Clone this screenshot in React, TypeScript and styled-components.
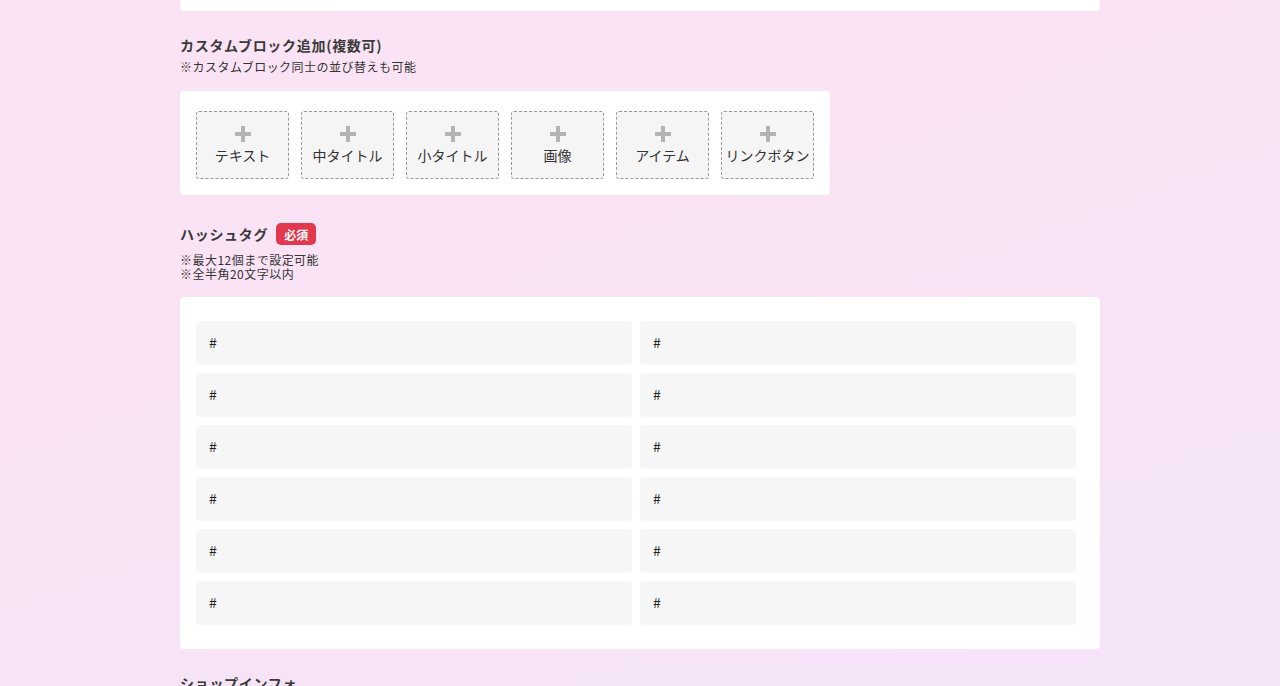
import React from "react";
import styled, { createGlobalStyle } from "styled-components";

const GlobalStyle = createGlobalStyle`
  html, body {
    margin: 0;
    padding: 0;
  }
  body {
    font-family: "Noto Sans CJK JP", "Noto Sans", sans-serif;
    color: #333;
    background: linear-gradient(160deg, #fbe3f4 0%, #f8e3f5 50%, #f4e4f8 100%);
    min-height: 686px;
    overflow: hidden;
  }
`;

const Page = styled.div`
  width: 920px;
  margin: 0 auto;
`;

const TopCard = styled.div`
  height: 11px;
  background: #fff;
  border-radius: 0 0 4px 4px;
`;

const Section = styled.section<{ $top: number }>`
  margin-top: ${(p) => p.$top}px;
`;

const TitleRow = styled.div`
  display: flex;
  align-items: center;
  gap: 8px;
  height: 22px;
`;

const Title = styled.h2`
  margin: 0;
  font-size: 14px;
  line-height: 20px;
  font-weight: 700;
  letter-spacing: 0.05em;
  color: #3a3a3a;
`;

const Badge = styled.span`
  display: inline-flex;
  align-items: center;
  justify-content: center;
  height: 22px;
  padding: 0 8px;
  border-radius: 5px;
  background: #e0384c;
  color: #fff;
  font-size: 12px;
  font-weight: 700;
`;

const Note = styled.p<{ $top: number }>`
  margin: ${(p) => p.$top}px 0 0;
  font-size: 12px;
  line-height: 14px;
  letter-spacing: 0.04em;
  color: #333;
`;

const Card = styled.div<{ $width?: number; $pad: string; $top: number }>`
  width: ${(p) => (p.$width ? `${p.$width}px` : "auto")};
  box-sizing: border-box;
  margin-top: ${(p) => p.$top}px;
  padding: ${(p) => p.$pad};
  background: #fff;
  border-radius: 4px;
`;

const BlockList = styled.div`
  display: flex;
  gap: 12px;
`;

const BlockButton = styled.button`
  width: 93px;
  height: 68px;
  box-sizing: border-box;
  padding: 13px 0 0;
  display: flex;
  flex-direction: column;
  align-items: center;
  gap: 3px;
  background: #f5f5f5;
  border: 1px dashed #999;
  border-radius: 3px;
  font-family: inherit;
  font-size: 14px;
  line-height: 18px;
  color: #333;
  white-space: nowrap;
  cursor: pointer;
`;

const TagGrid = styled.div`
  display: grid;
  grid-template-columns: 436px 436px;
  gap: 8px;
`;

const TagInput = styled.div`
  height: 44px;
  box-sizing: border-box;
  padding: 0 12px 2px 13px;
  display: flex;
  align-items: center;
  background: #f6f6f6;
  border-radius: 4px;
  font-size: 14px;
  color: #222;
`;

const Plus = () => (
  <svg width="18" height="18" viewBox="0 0 18 18">
    <path d="M9 1v16M1 9h16" stroke="#b3b3b3" strokeWidth="4" />
  </svg>
);

const blocks = ["テキスト", "中タイトル", "小タイトル", "画像", "アイテム", "リンクボタン"];

export default function App() {
  return (
    <>
      <GlobalStyle />
      <Page>
        <TopCard />

        <Section $top={24}>
          <Title>カスタムブロック追加(複数可)</Title>
          <Note $top={5}>※カスタムブロック同士の並び替えも可能</Note>
          <Card $width={650} $pad="20px 16px 16px" $top={17}>
            <BlockList>
              {blocks.map((b) => (
                <BlockButton key={b}>
                  <Plus />
                  {b}
                </BlockButton>
              ))}
            </BlockList>
          </Card>
        </Section>

        <Section $top={28}>
          <TitleRow>
            <Title>ハッシュタグ</Title>
            <Badge>必須</Badge>
          </TitleRow>
          <Note $top={8}>
            ※最大12個まで設定可能
            <br />
            ※全半角20文字以内
          </Note>
          <Card $pad="24px 24px 24px 16px" $top={16}>
            <TagGrid>
              {Array.from({ length: 12 }).map((_, i) => (
                <TagInput key={i}>#</TagInput>
              ))}
            </TagGrid>
          </Card>
        </Section>

        <Section $top={24}>
          <Title>ショップインフォ</Title>
        </Section>
      </Page>
    </>
  );
}
